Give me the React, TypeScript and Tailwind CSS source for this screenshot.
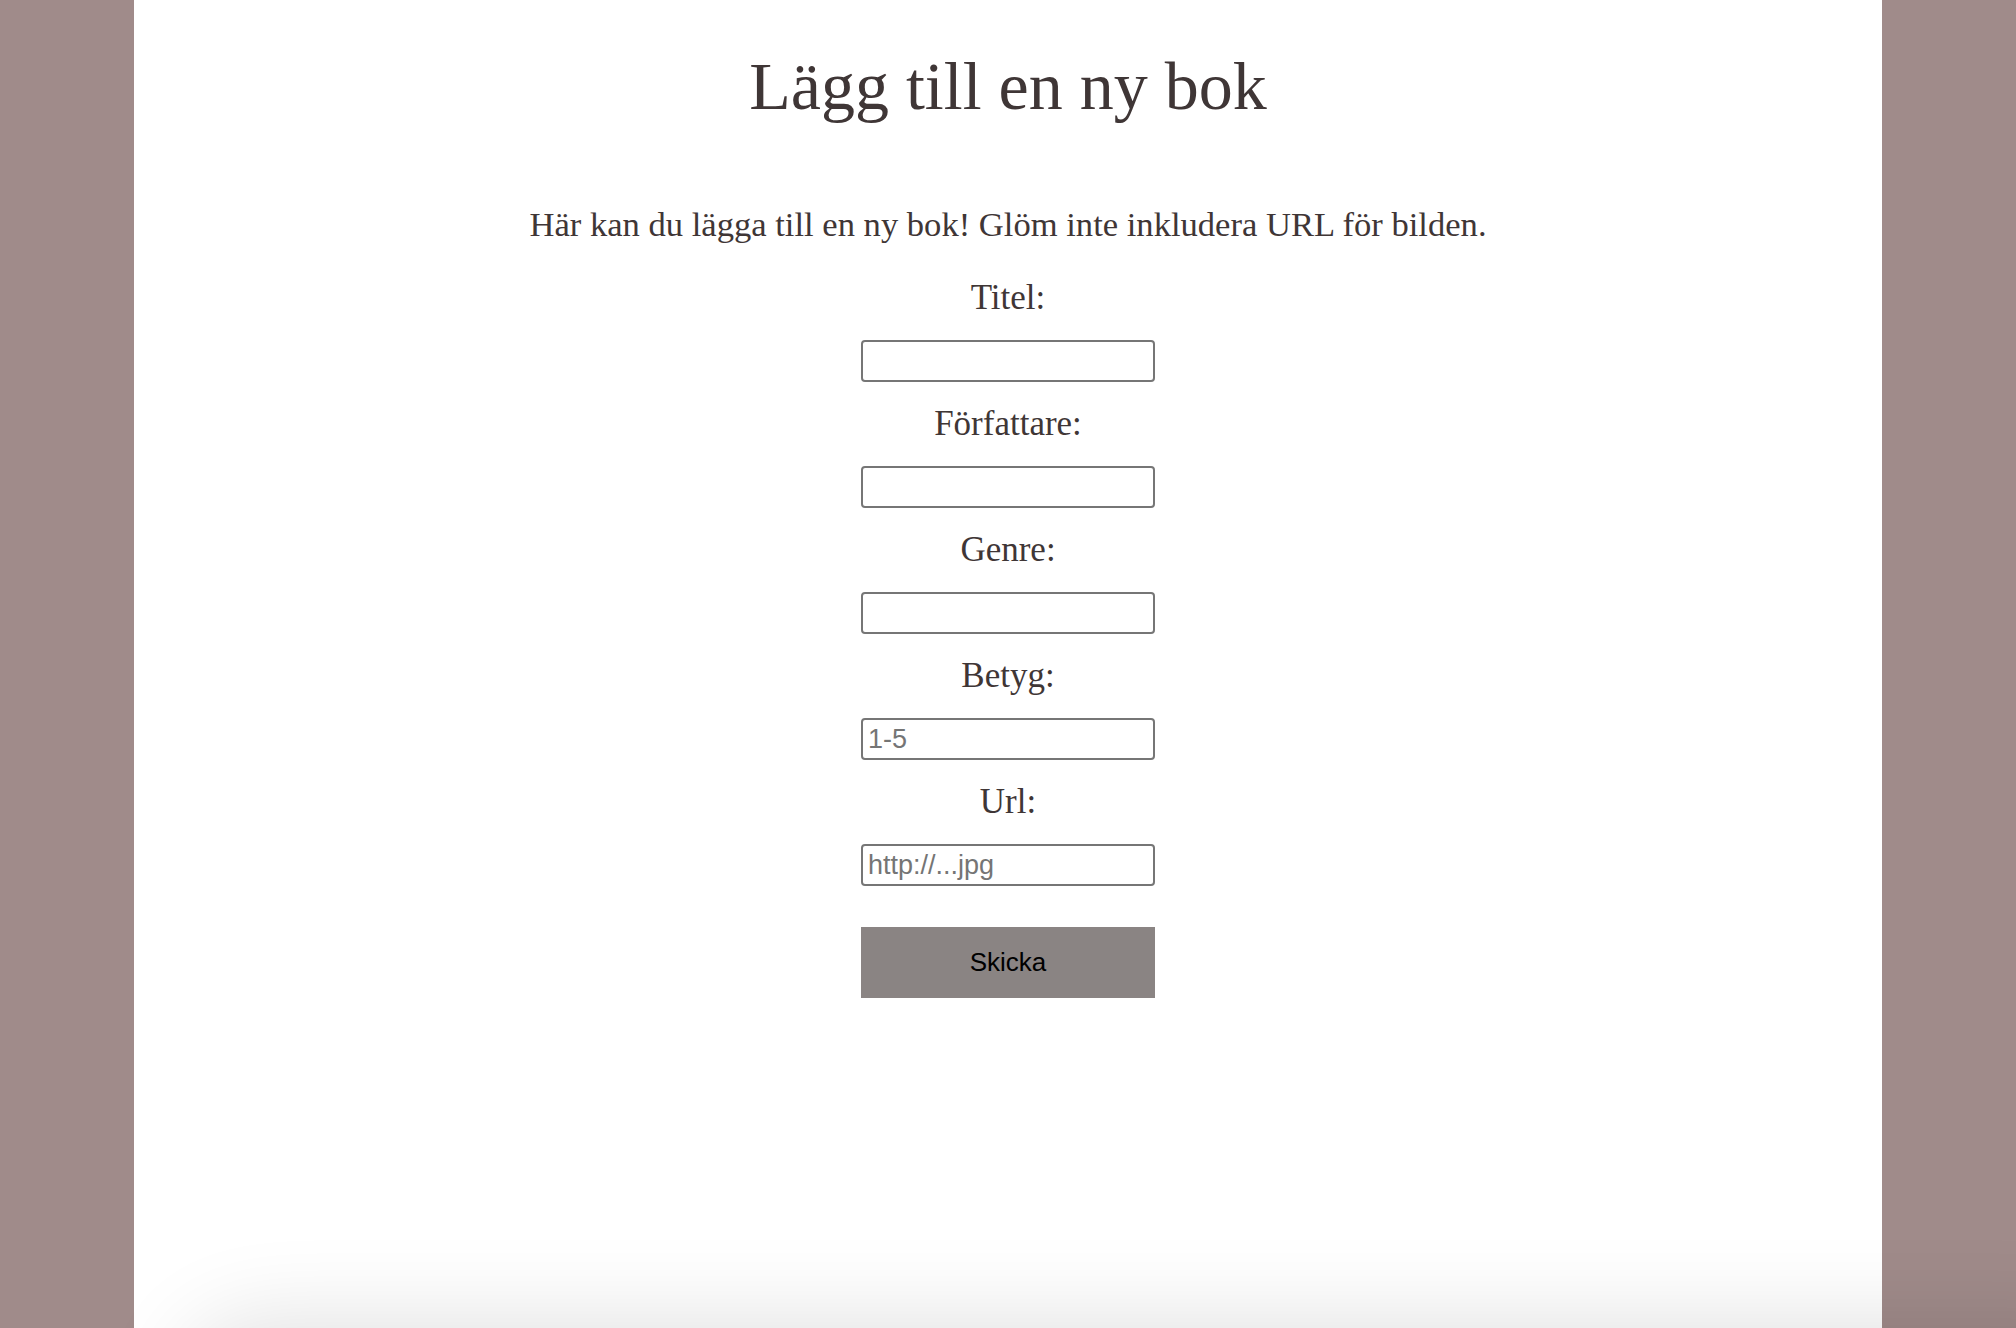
import React from "react";

const serif = "font-['Liberation_Serif',serif]";

function Field({ label, placeholder, first }: { label: string; placeholder?: string; first?: boolean }) {
  return (
    <div className="flex flex-col items-center">
      <label className={`${first ? "mt-0" : "mt-[20px]"} h-[44px] leading-[44px] text-[35px] text-[#3f3636] ${serif}`}>{label}</label>
      <input
        type="text"
        placeholder={placeholder}
        className="mt-[20px] h-[42px] w-[294px] rounded-[4px] border-2 border-[#767676] bg-white pl-[5px] text-[27px] font-['Liberation_Sans',Arial,sans-serif] text-black placeholder:text-[#757575] outline-none"
      />
    </div>
  );
}

export default function App() {
  return (
    <div className="relative h-[1328px] overflow-hidden bg-[#a08b8a]">
      <div className="mx-auto flex h-full w-[1748px] flex-col items-center bg-white">
        <h1 className={`mt-[54px] h-[64px] leading-[64px] text-[68px] text-[#3f3636] ${serif}`}>Lägg till en ny bok</h1>
        <p className={`mt-[84px] h-[44px] leading-[44px] text-[34.6px] text-[#3f3636] ${serif}`}>
          Här kan du lägga till en ny bok! Glöm inte inkludera URL för bilden.
        </p>
        <form className="mt-[30px] flex flex-col items-center" onSubmit={(e) => e.preventDefault()}>
          <Field label="Titel:" first />
          <Field label="Författare:" />
          <Field label="Genre:" />
          <Field label="Betyg:" placeholder="1-5" />
          <Field label="Url:" placeholder="http://...jpg" />
          <button
            type="submit"
            className="mt-[41px] h-[71px] w-[294px] bg-[#8a8483] text-[26px] text-black font-['Liberation_Sans',Arial,sans-serif]"
          >
            Skicka
          </button>
        </form>
      </div>
      <div className="pointer-events-none absolute left-[200px] right-[-100px] top-[1340px] h-[120px] rounded-[80px] shadow-[0_0_90px_20px_rgba(0,0,0,0.12)]" />
    </div>
  );
}
